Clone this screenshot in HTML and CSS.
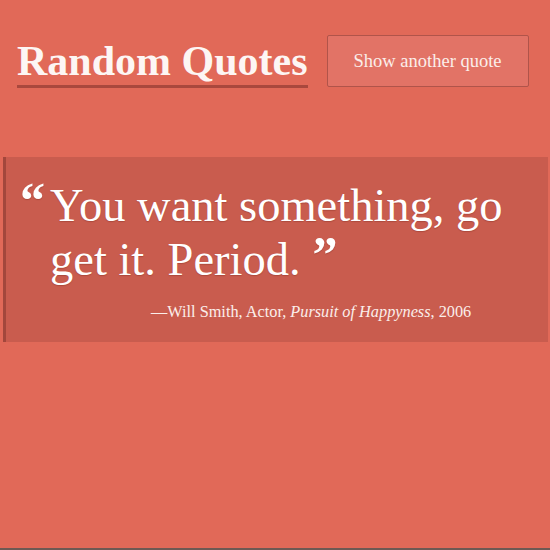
FILE: index.html
```html
<!DOCTYPE html>
<html>
<head>
<meta charset="utf-8">
<link rel="stylesheet" href="styles.css">
</head>
<body>
<div class="page">
  <header class="top">
    <h1 class="title">Random Quotes</h1>
    <button class="btn">Show another quote</button>
  </header>
  <blockquote class="quote">
    <p class="text"><span class="mark open">“</span>You want something, go get it. Period.<span class="mark close">”</span></p>
    <p class="cite">—Will Smith, Actor, <em>Pursuit of Happyness</em>, 2006</p>
  </blockquote>
</div>
</body>
</html>
```
FILE: styles.css
```css
html, body {
  margin: 0;
  padding: 0;
  background: #e16958;
}
.page {
  box-sizing: border-box;
  height: 550px;
  border-bottom: 2px solid #6e5953;
  font-family: "Liberation Serif", "DejaVu Serif", serif;
  color: #fff;
  overflow: hidden;
}
.top {
  display: flex;
  align-items: flex-start;
  padding: 35px 0 0 17px;
}
.title {
  margin: 0;
  font-size: 42px;
  line-height: 48px;
  padding-top: 2px;
  font-weight: bold;
  border-bottom: 3px solid #a9483d;
  color: #fdf6f4;
}
.btn {
  margin-left: 19px;
  width: 202px;
  height: 52px;
  background: #e27366;
  border: 1px solid #b0544a;
  border-radius: 2px;
  color: #fbeeea;
  font-family: "Liberation Serif", serif;
  font-size: 18.5px;
  cursor: pointer;
}
.quote {
  margin: 69px 2px 0 3px;
  background: #c95c4e;
  border-left: 3px solid #a3473c;
  padding: 22px 10px 19px 14px;
}
.text {
  margin: 0;
  font-size: 46.5px;
  line-height: 54px;
  padding-left: 30px;
  text-indent: -30px;
  text-shadow: 0 1px 1px rgba(120, 40, 30, 0.35);
}
.mark {
  font-weight: bold;
  font-size: 50px;
  line-height: 0;
  vertical-align: 4px;
}
.open { margin-right: 5px; }
.close { margin-left: 12px; }
.cite {
  margin: 14px 0 0 131px;
  font-size: 16.3px;
  line-height: 22px;
  color: #fbeeea;
}
.cite em { font-style: italic; }
```
